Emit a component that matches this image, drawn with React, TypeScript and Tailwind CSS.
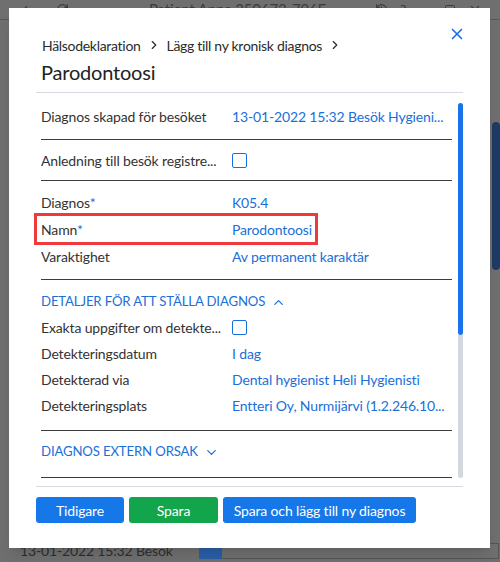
import { ChevronDown, ChevronRight, ChevronUp, X, History, RotateCw, Minus, Square, ChevronLeft } from "lucide-react";

const font = { fontFamily: 'Lato, "Noto Sans", sans-serif' };

const Row = ({ label, star, children, h = "h-[27px]" }: { label: string; star?: boolean; children?: React.ReactNode; h?: string }) => (
  <div className={`flex items-center ${h}`}>
    <div className="w-[191px] shrink-0 truncate text-[#333]">
      {label}
      {star && <span className="text-[#1a6fd9]">*</span>}
    </div>
    <div className="whitespace-nowrap text-[#1a6fd9]">{children}</div>
  </div>
);

const Checkbox = () => <div className="h-[15px] w-[15px] shrink-0 rounded-[2px] border-[1.5px] border-[#1a6fd9]" />;

export default function App() {
  return (
    <div className="relative h-[562px] w-[500px] overflow-hidden bg-[#6f6f6f] text-[14px] tracking-[-0.15px]" style={font}>
      {/* app behind the dialog */}
      <div className="flex h-[20px] items-center border-b border-[#2d5ea8] px-[18px] text-[#3c3c3c]">
        <ChevronLeft size={14} />
        <RotateCw size={13} className="ml-[24px]" />
        <div className="ml-[80px] text-[15px]">Patient Anna 250673-796F</div>
        <div className="ml-auto flex items-center gap-[12px]">
          <History size={13} />
          <span className="text-[14px]">?</span>
          <Minus size={14} />
          <Square size={12} />
          <X size={14} />
        </div>
      </div>
      <div className="flex">
        <div className="flex-1" />
        <div className="mt-[102px] h-[148px] w-[8px] rounded-[4px] bg-[#1f3b63]" />
      </div>
      <div className="mt-[270px] flex items-center gap-[26px] pl-[20px] text-[#2e2e2e]">
        <span>13-01-2022 15:32 Besök</span>
        <div className="flex h-[16px] w-[300px]">
          <div className="w-[22px] bg-[#2a5ea8]" />
          <div className="flex-1 border border-[#555]" />
        </div>
      </div>

      {/* dialog */}
      <div className="absolute left-[9px] top-[8px] flex h-[540px] w-[481px] flex-col bg-white shadow-lg">
        <div className="relative px-[27px] pt-[27px]">
          <div className="flex h-[20px] items-center pl-[6px] text-[14px] tracking-[-0.3px] text-[#2b2b2b]">
            Hälsodeklaration
            <ChevronRight size={14} strokeWidth={2} className="mx-[6px]" />
            Lägg till ny kronisk diagnos
            <ChevronRight size={14} strokeWidth={2} className="ml-[6px]" />
          </div>
          <div className="mt-[3px] h-[28px] pl-[5px] text-[20px] leading-[28px] tracking-[-0.2px] text-[#222]">Parodontoosi</div>
          <X size={18} strokeWidth={2.2} className="absolute right-[24px] top-[17px] text-[#1a73e8]" />
          <div className="mt-[6px] h-px bg-[#d5dbe1]" />
        </div>

        <div className="mx-[27px] flex h-[393px]">
          <div className="w-[416px] pl-[5px]">
            <Row label="Diagnos skapad för besöket" h="h-[46px]">13-01-2022 15:32 Besök Hygieni...</Row>
            <div className="h-px bg-[#3c3c3c]" />
            <div className="flex h-[40px] items-center">
              <div className="w-[191px] shrink-0 truncate text-[#333]">Anledning till besök registre...</div>
              <Checkbox />
            </div>
            <div className="h-px bg-[#3c3c3c]" />
            <div className="pb-[9px] pt-[8px]">
              <Row label="Diagnos" star>K05.4</Row>
              <div className="relative">
                <Row label="Namn" star>Parodontoosi</Row>
                <div className="absolute left-[-7px] top-[-3px] h-[32px] w-[284px] border-[3px] border-[#ee3a3f]" />
              </div>
              <Row label="Varaktighet">Av permanent karaktär</Row>
            </div>
            <div className="h-px bg-[#3c3c3c]" />
            <div className="pb-[12px] pt-[10px]">
              <div className="flex h-[24px] items-center text-[13.2px] text-[#1a6fd9]">
                DETALJER FÖR ATT STÄLLA DIAGNOS
                <ChevronUp size={15} strokeWidth={2} className="ml-[6px]" />
              </div>
              <div className="flex h-[26px] items-center">
                <div className="w-[191px] shrink-0 truncate text-[#333]">Exakta uppgifter om detekte...</div>
                <Checkbox />
              </div>
              <Row label="Detekteringsdatum" h="h-[26px]">I dag</Row>
              <Row label="Detekterad via" h="h-[26px]">Dental hygienist Heli Hygienisti</Row>
              <Row label="Detekteringsplats" h="h-[26px]">Entteri Oy, Nurmijärvi (1.2.246.10...</Row>
            </div>
            <div className="h-px bg-[#3c3c3c]" />
            <div className="pb-[13px] pt-[9px]">
              <div className="flex h-[24px] items-center text-[13.2px] text-[#1a6fd9]">
                DIAGNOS EXTERN ORSAK
                <ChevronDown size={15} strokeWidth={2} className="ml-[6px]" />
              </div>
            </div>
            <div className="h-px bg-[#3c3c3c]" />
          </div>
          <div className="ml-[6px] flex w-[5px] flex-col pt-[10px]">
            <div className="h-[232px] rounded-full bg-[#1a73e8]" />
            <div className="h-[143px] rounded-b-full bg-[#d3d8de]" />
          </div>
        </div>

        <div className="mx-[27px] h-px bg-[#d5dbe1]" />
        <div className="flex gap-[5px] px-[27px] pt-[10px] text-white">
          <button className="h-[26px] w-[88px] rounded-[3px] bg-[#1677e8]">Tidigare</button>
          <button className="h-[26px] w-[89px] rounded-[3px] bg-[#13a54b]">Spara</button>
          <button className="h-[26px] w-[193px] rounded-[3px] bg-[#1677e8]">Spara och lägg till ny diagnos</button>
        </div>
      </div>
    </div>
  );
}
